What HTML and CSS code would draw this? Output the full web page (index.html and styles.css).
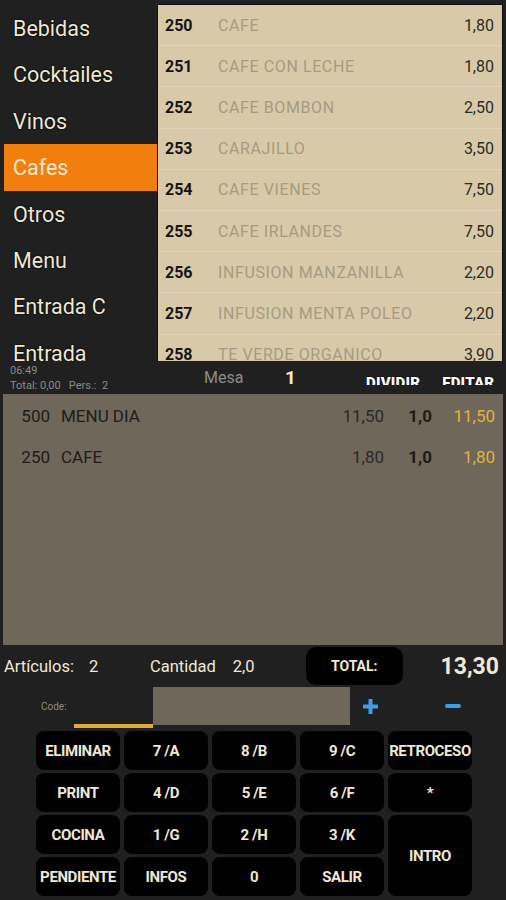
FILE: index.html
```html
<!DOCTYPE html>
<html lang="es">
<head>
  <meta charset="UTF-8">
  <meta name="viewport" content="width=device-width, initial-scale=1.0">
  <title>TPV Cafes</title>
  <link rel="stylesheet" href="styles.css">
</head>
<body>
  <div class="top">
    <ul class="cats">
      <li>Bebidas</li>
      <li>Cocktailes</li>
      <li>Vinos</li>
      <li class="active">Cafes</li>
      <li>Otros</li>
      <li>Menu</li>
      <li>Entrada C</li>
      <li>Entrada</li>
    </ul>
    <div class="products">
      <div class="prod"><span class="num">250</span><span class="name">CAFE</span><span class="price">1,80</span></div>
      <div class="prod"><span class="num">251</span><span class="name">CAFE CON LECHE</span><span class="price">1,80</span></div>
      <div class="prod"><span class="num">252</span><span class="name">CAFE BOMBON</span><span class="price">2,50</span></div>
      <div class="prod"><span class="num">253</span><span class="name">CARAJILLO</span><span class="price">3,50</span></div>
      <div class="prod"><span class="num">254</span><span class="name">CAFE VIENES</span><span class="price">7,50</span></div>
      <div class="prod"><span class="num">255</span><span class="name">CAFE IRLANDES</span><span class="price">7,50</span></div>
      <div class="prod"><span class="num">256</span><span class="name">INFUSION MANZANILLA</span><span class="price">2,20</span></div>
      <div class="prod"><span class="num">257</span><span class="name">INFUSION MENTA POLEO</span><span class="price">2,20</span></div>
      <div class="prod"><span class="num">258</span><span class="name">TE VERDE ORGANICO</span><span class="price">3,90</span></div>
    </div>
  </div>

  <div class="info">
    <div class="meta">
      <div>06:49</div>
      <div class="totals">Total: 0,00   Pers.:  2</div>
    </div>
    <span class="mesa">Mesa</span>
    <span class="mesa-num">1</span>
    <div class="actions">
      <span>DIVIDIR</span>
      <span>EDITAR</span>
    </div>
  </div>

  <div class="order">
    <div class="line"><span class="code">500</span><span class="desc">MENU DIA</span><span class="unit">11,50</span><span class="qty">1,0</span><span class="sum">11,50</span></div>
    <div class="line"><span class="code">250</span><span class="desc">CAFE</span><span class="unit">1,80</span><span class="qty">1,0</span><span class="sum">1,80</span></div>
  </div>

  <div class="summary">
    <span class="lbl">Artículos:</span><span class="val arts">2</span>
    <span class="lbl cant">Cantidad</span><span class="val">2,0</span>
    <div class="total-box">TOTAL:</div>
    <span class="total">13,30</span>
  </div>

  <div class="code-row">
    <div class="code-field">
      <span class="code-lbl">Code:</span>
    </div>
    <div class="code-input"></div>
    <div class="pm">
      <svg width="15" height="15" viewBox="0 0 15 15"><path d="M7.5 1v13M1 7.5h13" stroke="#3d9fe2" stroke-width="4" stroke-linecap="round"/></svg>
    </div>
    <div class="pm">
      <svg width="16" height="6" viewBox="0 0 16 6"><path d="M2 3h12" stroke="#3d9fe2" stroke-width="4" stroke-linecap="round"/></svg>
    </div>
  </div>

  <div class="keypad">
    <button>ELIMINAR</button>
    <button>7 /A</button>
    <button>8 /B</button>
    <button>9 /C</button>
    <button>RETROCESO</button>
    <button>PRINT</button>
    <button>4 /D</button>
    <button>5 /E</button>
    <button>6 /F</button>
    <button>*</button>
    <button>COCINA</button>
    <button>1 /G</button>
    <button>2 /H</button>
    <button>3 /K</button>
    <button class="intro">INTRO</button>
    <button>PENDIENTE</button>
    <button>INFOS</button>
    <button>0</button>
    <button>SALIR</button>
  </div>
</body>
</html>
```

FILE: styles.css
```css
body {
  margin: 0;
  width: 506px;
  height: 900px;
  overflow: hidden;
  background: #202020;
  font-family: Roboto, 'Noto Sans', sans-serif;
  color: #efe8d3;
}

/* Categories + products */
.top {
  display: flex;
  height: 361px;
  overflow: hidden;
}

.cats {
  list-style: none;
  margin: 0;
  padding: 5px 0 0 4px;
  width: 153px;
  flex-shrink: 0;
}

.cats li {
  height: 46.4px;
  line-height: 47px;
  padding-left: 9px;
  font-size: 21.5px;
  text-shadow: 0 0 2px #000, 0 0 1px #000;
}

.cats li.active {
  background: #f27e0e;
  color: #f6e9cf;
  text-shadow: none;
}

.products {
  width: 344px;
  margin-top: 4px;
  background: #d8caa8;
  border: 1px solid #0e0e0e;
  border-bottom: none;
}

.prod {
  display: flex;
  align-items: center;
  height: 41.2px;
  padding: 0 8px 0 7px;
  border-bottom: 1px solid #e0d5b8;
  box-sizing: border-box;
  font-size: 16px;
}

.prod .num {
  width: 53px;
  font-weight: bold;
  color: #151515;
}

.prod .name {
  flex: 1;
  color: #a69b82;
  letter-spacing: 0.6px;
}

.prod .price {
  color: #2c2a26;
}

/* Mesa info bar */
.info {
  display: flex;
  height: 33px;
}

.meta {
  width: 194px;
  padding-left: 10px;
  font-size: 11px;
  color: #8c8a84;
  line-height: 15px;
  padding-top: 2px;
}

.meta .totals {
  white-space: pre;
}

.mesa {
  font-size: 16px;
  color: #8f8d88;
  line-height: 34px;
  width: 81px;
}

.mesa-num {
  font-size: 19px;
  font-weight: bold;
  color: #efe8d3;
  line-height: 34px;
  width: 81px;
}

.actions {
  display: flex;
  gap: 22px;
  height: 24px;
  overflow: hidden;
}

.actions span {
  padding-top: 13px;
  font-size: 15px;
  font-weight: 900;
  color: #fff;
  letter-spacing: 0.2px;
  line-height: 18px;
  text-shadow: 0 0 2px #000;
}

/* Order lines */
.order {
  margin: 0 3px;
  height: 251px;
  background: #6e675a;
  padding-top: 1px;
  box-sizing: border-box;
}

.line {
  display: flex;
  align-items: center;
  height: 41px;
  font-size: 17px;
  color: #1e1c19;
  padding-right: 8px;
}

.line .code {
  width: 47px;
  text-align: right;
  margin-right: 11px;
}

.line .desc {
  flex: 1;
}

.line .unit {
  color: #2c2a26;
}

.line .qty {
  width: 48px;
  text-align: right;
  font-weight: bold;
}

.line .sum {
  width: 63px;
  text-align: right;
  color: #e4b13a;
}

/* Summary */
.summary {
  display: flex;
  align-items: center;
  height: 42px;
  font-size: 16.5px;
  padding: 0 7px 0 4px;
}

.summary .lbl {
  margin-right: 15px;
}

.summary .val {
  width: 49px;
}

.summary .arts {
  width: 61px;
}

.summary .cant {
  margin-right: 17px;
}

.total-box {
  margin-left: 24px;
  width: 97px;
  height: 38px;
  background: #000;
  border-radius: 10px;
  display: flex;
  align-items: center;
  justify-content: center;
  font-size: 14px;
  font-weight: bold;
}

.total {
  flex: 1;
  text-align: right;
  font-size: 23px;
  font-weight: bold;
}

/* Code input */
.code-row {
  display: flex;
  height: 44px;
}

.code-field {
  width: 79px;
  margin-left: 74px;
  height: 41px;
  border-bottom: 4px solid #e5a930;
  box-sizing: border-box;
  position: relative;
}

.code-lbl {
  position: absolute;
  left: -33px;
  top: 14px;
  font-size: 10px;
  color: #8c8a84;
}

.code-input {
  width: 197px;
  height: 38px;
  background: #6e675a;
}

.pm {
  width: 40px;
  height: 38px;
  display: flex;
  align-items: center;
  justify-content: center;
}

.pm + .pm {
  margin-left: 43px;
}

/* Keypad */
.keypad {
  display: grid;
  grid-template-columns: repeat(5, 84px);
  grid-auto-rows: 39px;
  gap: 3px 4px;
  margin-left: 36px;
}

.keypad button {
  background: #000;
  border: none;
  border-radius: 8px;
  color: #efe8d3;
  font-family: Roboto, 'Noto Sans', sans-serif;
  font-size: 15px;
  font-weight: bold;
  letter-spacing: -0.4px;
  padding: 0;
  white-space: nowrap;
}

.keypad .intro {
  grid-row: span 2;
}
```
